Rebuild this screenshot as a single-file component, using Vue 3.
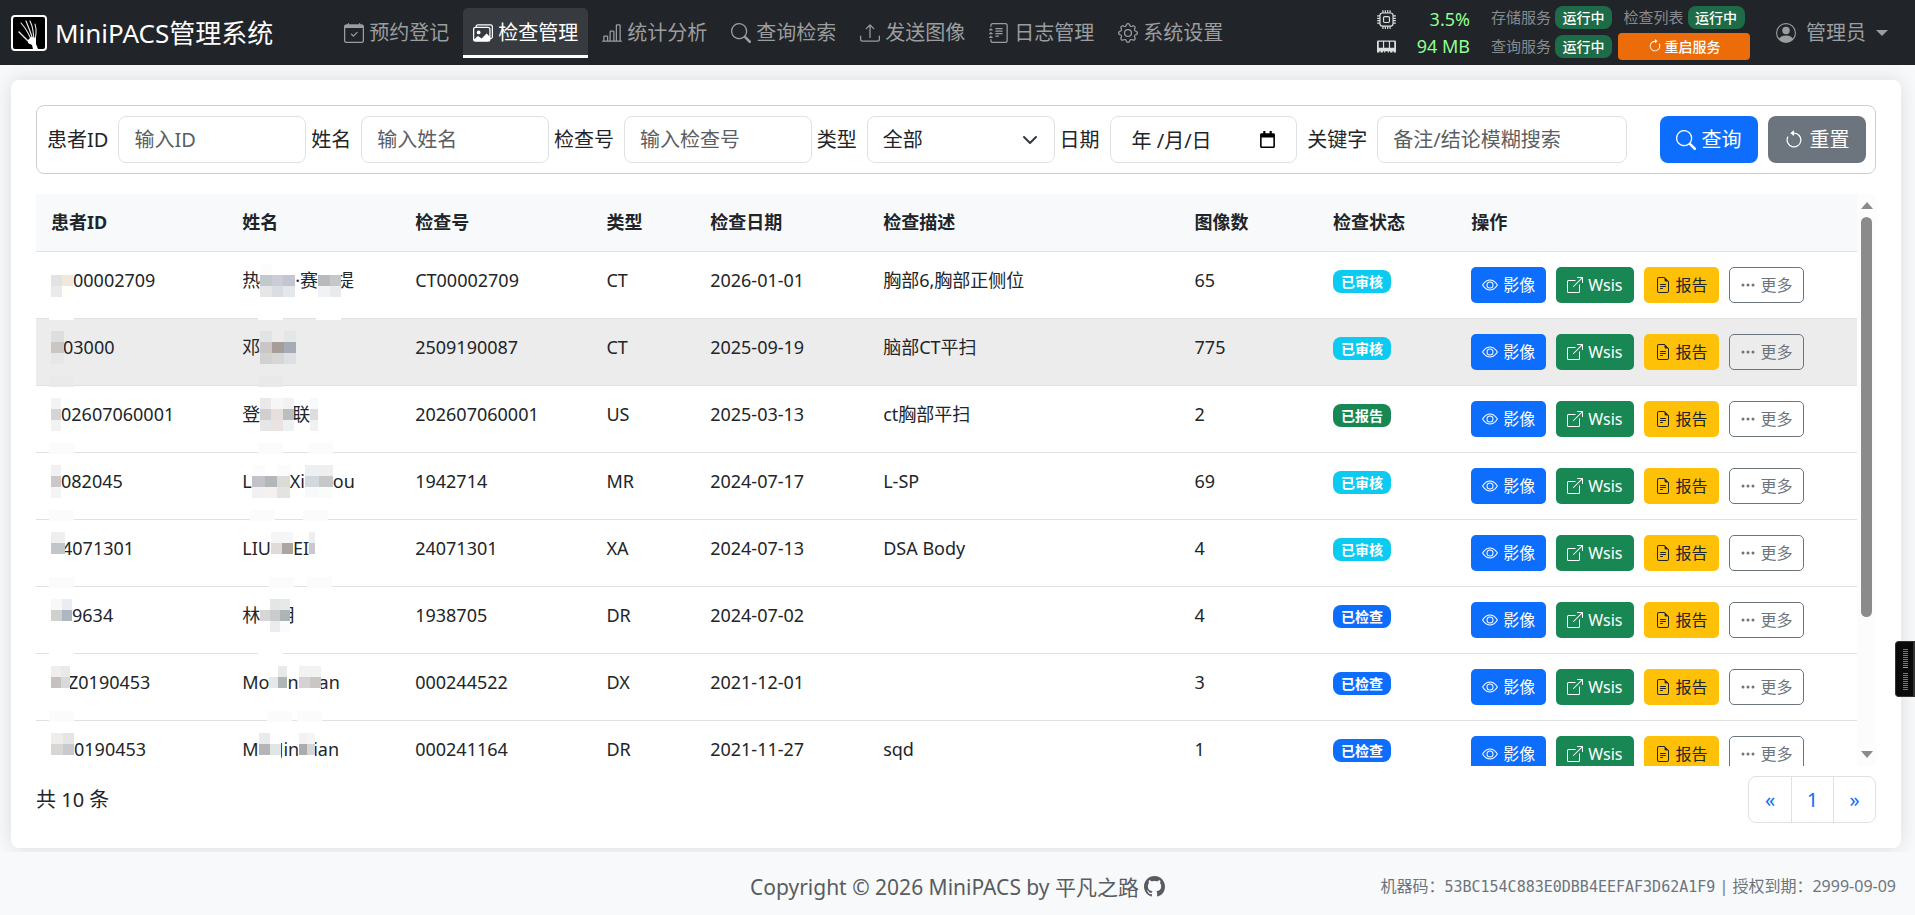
<script setup>
import { ref, h } from 'vue'

const icons = {
  calendar: ['M10.854 7.146a.5.5 0 0 1 0 .708l-3 3a.5.5 0 0 1-.708 0l-1.5-1.5a.5.5 0 1 1 .708-.708L7.5 9.793l2.646-2.647a.5.5 0 0 1 .708 0', 'M3.5 0a.5.5 0 0 1 .5.5V1h8V.5a.5.5 0 0 1 1 0V1h1a2 2 0 0 1 2 2v11a2 2 0 0 1-2 2H2a2 2 0 0 1-2-2V3a2 2 0 0 1 2-2h1V.5a.5.5 0 0 1 .5-.5M1 4v10a1 1 0 0 0 1 1h12a1 1 0 0 0 1-1V4z'],
  images: ['M4.502 9a1.5 1.5 0 1 0 0-3 1.5 1.5 0 0 0 0 3', 'M14.002 13a2 2 0 0 1-2 2h-10a2 2 0 0 1-2-2V5A2 2 0 0 1 2 3a2 2 0 0 1 2-2h10a2 2 0 0 1 2 2v8a2 2 0 0 1-1.998 2M14 2H4a1 1 0 0 0-1 1h9.002a2 2 0 0 1 2 2v7A1 1 0 0 0 15 11V3a1 1 0 0 0-1-1M2.002 4a1 1 0 0 0-1 1v8l2.646-2.354a.5.5 0 0 1 .63-.062l2.66 1.773 3.71-3.71a.5.5 0 0 1 .577-.094l1.777 1.947V5a1 1 0 0 0-1-1z'],
  chart: ['M11 2a1 1 0 0 1 1-1h2a1 1 0 0 1 1 1v12h.5a.5.5 0 0 1 0 1H.5a.5.5 0 0 1 0-1H1v-3a1 1 0 0 1 1-1h2a1 1 0 0 1 1 1v3h1V7a1 1 0 0 1 1-1h2a1 1 0 0 1 1 1v7h1zm1 12h2V2h-2zm-3 0V7H7v7zm-5 0v-3H2v3z'],
  search: ['M11.742 10.344a6.5 6.5 0 1 0-1.397 1.398h-.001q.044.06.098.115l3.85 3.85a1 1 0 0 0 1.415-1.414l-3.85-3.85a1 1 0 0 0-.115-.1zM12 6.5a5.5 5.5 0 1 1-11 0 5.5 5.5 0 0 1 11 0'],
  upload: ['M.5 9.9a.5.5 0 0 1 .5.5v2.5a1 1 0 0 0 1 1h12a1 1 0 0 0 1-1v-2.5a.5.5 0 0 1 1 0v2.5a2 2 0 0 1-2 2H2a2 2 0 0 1-2-2v-2.5a.5.5 0 0 1 .5-.5', 'M7.646 1.146a.5.5 0 0 1 .708 0l3 3a.5.5 0 0 1-.708.708L8.5 2.707V11.5a.5.5 0 0 1-1 0V2.707L5.354 4.854a.5.5 0 1 1-.708-.708z'],
  journal: ['M5 10.5a.5.5 0 0 1 .5-.5h2a.5.5 0 0 1 0 1h-2a.5.5 0 0 1-.5-.5m0-2a.5.5 0 0 1 .5-.5h5a.5.5 0 0 1 0 1h-5a.5.5 0 0 1-.5-.5m0-2a.5.5 0 0 1 .5-.5h5a.5.5 0 0 1 0 1h-5a.5.5 0 0 1-.5-.5m0-2a.5.5 0 0 1 .5-.5h5a.5.5 0 0 1 0 1h-5a.5.5 0 0 1-.5-.5', 'M3 0h10a2 2 0 0 1 2 2v12a2 2 0 0 1-2 2H3a2 2 0 0 1-2-2v-1h1v1a1 1 0 0 0 1 1h10a1 1 0 0 0 1-1V2a1 1 0 0 0-1-1H3a1 1 0 0 0-1 1v1H1V2a2 2 0 0 1 2-2', 'M1 5v-.5a.5.5 0 0 1 1 0V5h.5a.5.5 0 0 1 0 1h-2a.5.5 0 0 1 0-1zm0 3v-.5a.5.5 0 0 1 1 0V8h.5a.5.5 0 0 1 0 1h-2a.5.5 0 0 1 0-1zm0 3v-.5a.5.5 0 0 1 1 0v.5h.5a.5.5 0 0 1 0 1h-2a.5.5 0 0 1 0-1z'],
  gear: ['M8 4.754a3.246 3.246 0 1 0 0 6.492 3.246 3.246 0 0 0 0-6.492M5.754 8a2.246 2.246 0 1 1 4.492 0 2.246 2.246 0 0 1-4.492 0', 'M9.796 1.343c-.527-1.79-3.065-1.79-3.592 0l-.094.319a.873.873 0 0 1-1.255.52l-.292-.16c-1.64-.892-3.433.902-2.54 2.541l.159.292a.873.873 0 0 1-.52 1.255l-.319.094c-1.79.527-1.79 3.065 0 3.592l.319.094a.873.873 0 0 1 .52 1.255l-.16.292c-.892 1.64.901 3.434 2.541 2.54l.292-.159a.873.873 0 0 1 1.255.52l.094.319c.527 1.79 3.065 1.79 3.592 0l.094-.319a.873.873 0 0 1 1.255-.52l.292.16c1.64.893 3.434-.902 2.54-2.541l-.159-.292a.873.873 0 0 1 .52-1.255l.319-.094c1.79-.527 1.79-3.065 0-3.592l-.319-.094a.873.873 0 0 1-.52-1.255l.16-.292c.893-1.64-.902-3.433-2.541-2.54l-.292.159a.873.873 0 0 1-1.255-.52zm-2.633.283c.246-.835 1.428-.835 1.674 0l.094.319a1.873 1.873 0 0 0 2.693 1.115l.291-.16c.764-.415 1.6.42 1.184 1.185l-.159.292a1.873 1.873 0 0 0 1.116 2.692l.318.094c.835.246.835 1.428 0 1.674l-.319.094a1.873 1.873 0 0 0-1.115 2.693l.16.291c.415.764-.42 1.6-1.185 1.184l-.291-.159a1.873 1.873 0 0 0-2.693 1.116l-.094.318c-.246.835-1.428.835-1.674 0l-.094-.319a1.873 1.873 0 0 0-2.692-1.115l-.292.16c-.764.415-1.6-.42-1.184-1.185l.159-.291A1.873 1.873 0 0 0 1.945 8.93l-.319-.094c-.835-.246-.835-1.428 0-1.674l.319-.094A1.873 1.873 0 0 0 3.06 4.377l-.16-.292c-.415-.764.42-1.6 1.185-1.184l.292.159a1.873 1.873 0 0 0 2.692-1.115z'],
  cpu: ['M5 0a.5.5 0 0 1 .5.5V2h1V.5a.5.5 0 0 1 1 0V2h1V.5a.5.5 0 0 1 1 0V2h1V.5a.5.5 0 0 1 1 0V2A2.5 2.5 0 0 1 14 4.5h1.5a.5.5 0 0 1 0 1H14v1h1.5a.5.5 0 0 1 0 1H14v1h1.5a.5.5 0 0 1 0 1H14v1h1.5a.5.5 0 0 1 0 1H14a2.5 2.5 0 0 1-2.5 2.5v1.5a.5.5 0 0 1-1 0V14h-1v1.5a.5.5 0 0 1-1 0V14h-1v1.5a.5.5 0 0 1-1 0V14h-1v1.5a.5.5 0 0 1-1 0V14A2.5 2.5 0 0 1 2 11.5H.5a.5.5 0 0 1 0-1H2v-1H.5a.5.5 0 0 1 0-1H2v-1H.5a.5.5 0 0 1 0-1H2v-1H.5a.5.5 0 0 1 0-1H2A2.5 2.5 0 0 1 4.5 2V.5A.5.5 0 0 1 5 0m-.5 3A1.5 1.5 0 0 0 3 4.5v7A1.5 1.5 0 0 0 4.5 13h7a1.5 1.5 0 0 0 1.5-1.5v-7A1.5 1.5 0 0 0 11.5 3zM5 6.5A1.5 1.5 0 0 1 6.5 5h3A1.5 1.5 0 0 1 11 6.5v3A1.5 1.5 0 0 1 9.5 11h-3A1.5 1.5 0 0 1 5 9.5zM6.5 6a.5.5 0 0 0-.5.5v3a.5.5 0 0 0 .5.5h3a.5.5 0 0 0 .5-.5v-3a.5.5 0 0 0-.5-.5z'],
  memory: ['M1 3a1 1 0 0 0-1 1v9h2v-1h1v1h2v-1h1v1h1v-1h2v1h1v-1h1v1h2v-1h1v1h2V4a1 1 0 0 0-1-1zM1.5 4h3.500v5h-3.500zm4.500 0h4v5H6zm5 0h3.500v5H11z'],
  person: ['M11 6a3 3 0 1 1-6 0 3 3 0 0 1 6 0', 'M0 8a8 8 0 1 1 16 0A8 8 0 0 1 0 8m8-7a7 7 0 0 0-5.468 11.37C3.242 11.226 4.805 10 8 10s4.757 1.225 5.468 2.37A7 7 0 0 0 8 1'],
  clockwise: ['M8 3a5 5 0 1 0 4.546 2.914.5.5 0 0 1 .908-.417A6 6 0 1 1 8 2z', 'M8 4.466V.534a.25.25 0 0 1 .41-.192l2.36 1.966c.12.1.12.284 0 .384L8.41 4.658A.25.25 0 0 1 8 4.466'],
  counter: ['M8 3a5 5 0 1 1-4.546 2.914.5.5 0 0 0-.908-.417A6 6 0 1 0 8 2z', 'M8 4.466V.534a.25.25 0 0 0-.41-.192L5.23 2.308a.25.25 0 0 0 0 .384l2.36 1.966A.25.25 0 0 0 8 4.466'],
  eye: ['M16 8s-3-5.5-8-5.5S0 8 0 8s3 5.5 8 5.5S16 8 16 8M1.173 8a13 13 0 0 1 1.66-2.043C4.12 4.668 5.88 3.5 8 3.5s3.879 1.168 5.168 2.457A13 13 0 0 1 14.828 8q-.086.13-.195.288c-.335.48-.83 1.12-1.465 1.755C11.879 11.332 10.119 12.5 8 12.5s-3.879-1.168-5.168-2.457A13 13 0 0 1 1.172 8z', 'M8 5.5a2.5 2.5 0 1 0 0 5 2.5 2.5 0 0 0 0-5M4.5 8a3.5 3.5 0 1 1 7 0 3.5 3.5 0 0 1-7 0'],
  open: ['M8.636 3.5a.5.5 0 0 0-.5-.5H1.5A1.5 1.5 0 0 0 0 4.5v10A1.5 1.5 0 0 0 1.5 16h10a1.5 1.5 0 0 0 1.5-1.5V7.864a.5.5 0 0 0-1 0V14.5a.5.5 0 0 1-.5.5h-10a.5.5 0 0 1-.5-.5v-10a.5.5 0 0 1 .5-.5h6.636a.5.5 0 0 0 .5-.5', 'M16 .5a.5.5 0 0 0-.5-.5h-5a.5.5 0 0 0 0 1h3.793L6.146 9.146a.5.5 0 1 0 .708.708L15 1.707V5.5a.5.5 0 0 0 1 0z'],
  file: ['M5.5 7a.5.5 0 0 0 0 1h5a.5.5 0 0 0 0-1zM5 9.5a.5.5 0 0 1 .5-.5h5a.5.5 0 0 1 0 1h-5a.5.5 0 0 1-.5-.5m0 2a.5.5 0 0 1 .5-.5h2a.5.5 0 0 1 0 1h-2a.5.5 0 0 1-.5-.5', 'M9.5 0H4a2 2 0 0 0-2 2v12a2 2 0 0 0 2 2h8a2 2 0 0 0 2-2V4.5zm0 1v2A1.5 1.5 0 0 0 11 4.5h2V14a1 1 0 0 1-1 1H4a1 1 0 0 1-1-1V2a1 1 0 0 1 1-1z'],
  dots: ['M3 9.5a1.5 1.5 0 1 1 0-3 1.5 1.5 0 0 1 0 3m5 0a1.5 1.5 0 1 1 0-3 1.5 1.5 0 0 1 0 3m5 0a1.5 1.5 0 1 1 0-3 1.5 1.5 0 0 1 0 3'],
  date: ['M4 0h2v2h4V0h2v2h2a1.5 1.5 0 0 1 1 1.5v11a1.5 1.5 0 0 1-1.5 1.5h-11A1.5 1.5 0 0 1 1 14.5v-11A1.5 1.5 0 0 1 2 2h2zM2.5 6v8.5h11V6z'],
  github: ['M8 0C3.58 0 0 3.58 0 8c0 3.54 2.29 6.53 5.47 7.59.4.07.55-.17.55-.38 0-.19-.01-.82-.01-1.49-2.01.37-2.53-.49-2.69-.94-.09-.23-.48-.94-.82-1.13-.28-.15-.68-.52-.01-.53.63-.01 1.08.58 1.23.82.72 1.21 1.87.87 2.33.66.07-.52.28-.87.51-1.07-1.78-.2-3.64-.89-3.64-3.95 0-.87.31-1.59.82-2.15-.08-.2-.36-1.02.08-2.12 0 0 .67-.21 2.2.82.64-.18 1.32-.27 2-.27s1.36.09 2 .27c1.53-1.04 2.2-.82 2.2-.82.44 1.1.16 1.92.08 2.12.51.56.82 1.27.82 2.15 0 3.07-1.87 3.75-3.65 3.95.29.25.54.73.54 1.48 0 1.07-.01 1.93-.01 2.2 0 .21.15.46.55.38A8.01 8.01 0 0 0 16 8c0-4.42-3.58-8-8-8']
}

const Icon = (props) => h('svg', { class: 'icon', viewBox: '0 0 16 16', 'aria-hidden': 'true' },
  icons[props.name].map((d) => h('path', { d, fill: 'currentColor', 'fill-rule': 'evenodd' })))
Icon.props = ['name']

const nav = [
  ['calendar', '预约登记'], ['images', '检查管理'], ['chart', '统计分析'], ['search', '查询检索'],
  ['upload', '发送图像'], ['journal', '日志管理'], ['gear', '系统设置']
]
const columns = ['患者ID', '姓名', '检查号', '类型', '检查日期', '检查描述', '图像数', '检查状态', '操作']
const type = ref('全部')

// A mask hides part of a value: advance width, three rows of tile colours,
// the smudge on the row border, and how far the tiles reach over the next glyph.
const m = (w, top, mid, low, smudge = '#fbfbfb', over = 0) => ({ w, tiles: [top, mid, low], smudge, over })

const rows = [
  { id: [m(22, ['#fff', '#fff'], ['#e1e2e2', '#efe9dc'], ['#e9eaeb', '#fffef8'], '#fff'), '00002709'],
    name: ['热', m(35, ['#fcfcfc', '#fff', '#fff'], ['#c0c9cb', '#cccbd8', '#c2c6d2'], ['#e6e6e7', '#dadde1', '#e5e8ea'], '#fff'), '·赛', m(18, ['#fff', '#fff'], ['#b9babd', '#c4c8c9'], ['#f0f2f4', '#e8eaec'], '#fff', 5), '提'],
    no: 'CT00002709', type: 'CT', date: '2026-01-01', desc: '胸部6,胸部正侧位', n: 65, state: '已审核' },
  { id: [m(12, ['#dcdee0'], ['#cac6c2'], ['#e7e7e7'], '#eaeaea', 1), '03000'],
    name: ['邓', m(36, ['#e1e4e3', '#ececeb', '#e3e7e5'], ['#c9c6c5', '#a69d98', '#a6acb5'], ['#d1d1d1', '#d6d6d6', '#dedfe2'], '#e9e9e9')],
    no: '2509190087', type: 'CT', date: '2025-09-19', desc: '脑部CT平扫', n: 775, state: '已审核', active: true },
  { id: [m(10, ['#f3f3f3'], ['#d3d4d3'], ['#f2f2f3']), '02607060001'],
    name: ['登', m(32, ['#e9e9e9', '#f6f6f6', '#f2f2f2'], ['#d1d0cf', '#e7dfdd', '#b8bfbd'], ['#e5e7e6', '#e9e4e4', '#eff0f2'], '#fbfbfb', 2), '联', m(8, ['#f7f9fb'], ['#dddddf'], ['#f1f1f1'])],
    no: '202607060001', type: 'US', date: '2025-03-13', desc: 'ct胸部平扫', n: 2, state: '已报告' },
  { id: [m(10, ['#f1f1f1'], ['#cdc8c7'], ['#f4f4f5']), '082045'],
    name: ['L', m(38, ['#fcfcfc', '#fff', '#fbfbfb'], ['#c4c2c9', '#b2b7b8', '#dbdcd6'], ['#f1f1f1', '#f6f0ee', '#e2e4e2']), 'Xi', m(28, ['#edf0f3', '#efefef'], ['#d1d8de', '#c5c8c9'], ['#f7faf9', '#fafcfb']), 'ou'],
    no: '1942714', type: 'MR', date: '2024-07-17', desc: 'L-SP', n: 69, state: '已审核' },
  { id: [m(11, ['#eeeeef'], ['#c1c7c9'], ['#fff'], '#fbfbfb', 3), '4071301'],
    name: ['LIU', m(22, ['#f5f5f5', '#f4f6f8'], ['#e2dada', '#aaa7a3'], ['#fff', '#fff']), 'EI', m(6, ['#eeeef1'], ['#c9c8d0'], ['#fff'])],
    no: '24071301', type: 'XA', date: '2024-07-13', desc: 'DSA Body', n: 4, state: '已审核' },
  { id: [m(21, ['#f7f9f8', '#e9edf1'], ['#d0d1cf', '#adb7c1'], ['#fff', '#fff'], '#fff'), '9634'],
    name: ['林', m(18, ['#fff', '#e4e5e6', '#e7e8e8'], ['#d6d6d6', '#c9cbcc', '#aeb3b6'], ['#fff', '#ebecef', '#fbfbfb'], '#fff', 12), '月'],
    no: '1938705', type: 'DR', date: '2024-07-02', desc: '', n: 4, state: '已检查' },
  { id: [m(17, ['#efeeec', '#e9e9e8'], ['#c6c1be', '#d9d9d9'], ['#fff', '#fff'], '#fbfbfb', 2), 'Z0190453'],
    name: ['Mo', m(18, ['#fff', '#e7eae9'], ['#e4e8e8', '#adb5b7'], ['#fff', '#fff']), 'n', m(20, ['#f4f1f3', '#f3f2f3'], ['#d6d1d4', '#cac6c4'], ['#fff', '#fff'], '#fbfbfb', 2), 'an'],
    no: '000244522', type: 'DX', date: '2021-12-01', desc: '', n: 3, state: '已检查' },
  { id: [m(23, ['#efedec', '#e6e5e4'], ['#d9d5d3', '#c9cacd'], ['#fff', '#fff']), '0190453'],
    name: ['M', m(20, ['#e8eaeb', '#fff'], ['#b5b5b5', '#e0e5e5'], ['#fff', '#fff'], '#fbfbfb', 2), 'Jin', m(14, ['#f4f1f3', '#f6f5f6'], ['#aaacad', '#d9d5d5'], ['#fff', '#fff'], '#fbfbfb', 2), 'ian'],
    no: '000241164', type: 'DR', date: '2021-11-27', desc: 'sqd', n: 1, state: '已检查' }
]
const stateClass = { 已审核: 'cyan', 已报告: 'green', 已检查: 'blue' }

const Masked = (props) => h('span', { class: 'masked' }, props.parts.map((p) => {
  if (typeof p === 'string') return p
  const cell = (p.w + p.over) / p.tiles[0].length
  const rects = p.tiles.flatMap((line, y) => line.map((fill, x) =>
    h('rect', { x: x * cell, y: y * 11, width: cell, height: 11, fill })))
  rects.push(h('rect', { x: -2, y: 45, width: 25, height: 11, fill: p.smudge }))
  return h('svg', { class: 'mask', width: p.w, height: 33, 'aria-hidden': 'true', 'shape-rendering': 'crispEdges' }, rects)
}))
Masked.props = ['parts']
</script>

<template>
  <div class="page">
    <header class="topbar">
      <a class="brand" href="#">
        <svg class="logo" viewBox="0 0 36 36" aria-hidden="true">
          <rect x="1" y="1" width="34" height="34" rx="3" fill="#000" stroke="#fff" stroke-width="2" />
          <g fill="none" stroke="#e8e8e8" stroke-linecap="round">
            <path d="M19 28 14 23 11 20 8 17" stroke-width="1.4" />
            <path d="M21 26 17 18 14 13 10 8" stroke-width="1.1" />
            <path d="M22 25 19 16 17 11 15 6" stroke-width="1.2" />
            <path d="M23 25 22 16 21 11 19 6" stroke-width="1.1" />
            <path d="M24 26 25 18 25 14 24 9" stroke-width="1.1" />
          </g>
          <path d="M17 25 20 22 25 23 25 29 27 34H22L21 30 17 28Z" fill="#fff" />
        </svg>
        <span>MiniPACS管理系统</span>
      </a>
      <nav class="nav">
        <a v-for="[icon, label] in nav" :key="label" href="#" :class="{ active: label === '检查管理' }"><Icon :name="icon" /><span>{{ label }}</span></a>
      </nav>
      <div class="usage">
        <Icon name="cpu" /><span>3.5%</span>
        <Icon name="memory" /><span>94 MB</span>
      </div>
      <div class="services">
        <div class="service"><span>存储服务</span><b>运行中</b></div>
        <div class="service second"><span>检查列表</span><b>运行中</b></div>
        <div class="service"><span>查询服务</span><b>运行中</b></div>
        <button class="restart" type="button"><Icon name="clockwise" />重启服务</button>
      </div>
      <button class="user" type="button"><Icon name="person" /><span>管理员</span><i class="caret"></i></button>
    </header>

    <main class="card">
      <form class="filter" @submit.prevent>
        <label for="f-id">患者ID</label><input id="f-id" type="text" placeholder="输入ID" />
        <label for="f-name">姓名</label><input id="f-name" type="text" placeholder="输入姓名" />
        <label for="f-no">检查号</label><input id="f-no" type="text" placeholder="输入检查号" />
        <label for="f-type">类型</label>
        <select id="f-type" v-model="type"><option>全部</option><option>CT</option><option>MR</option></select>
        <label for="f-date">日期</label>
        <span class="date">
          <input id="f-date" type="text" value="年 /月/日" />
          <button type="button" aria-label="选择日期"><Icon name="date" /></button>
        </span>
        <label class="keyword" for="f-key">关键字</label><input id="f-key" class="wide" type="text" placeholder="备注/结论模糊搜索" />
        <div class="submit">
          <button class="blue" type="submit"><Icon name="search" />查询</button>
          <button class="gray" type="reset"><Icon name="counter" />重置</button>
        </div>
      </form>

      <div class="list">
        <div class="scroll">
          <table>
            <colgroup><col v-for="(c, i) in columns" :key="c" :class="'c' + i" /></colgroup>
            <thead><tr><th v-for="c in columns" :key="c" scope="col">{{ c }}</th></tr></thead>
            <tbody>
              <tr v-for="r in rows" :key="r.no" :class="{ hover: r.active }">
                <td><Masked :parts="r.id" /></td>
                <td><Masked :parts="r.name" /></td>
                <td>{{ r.no }}</td><td>{{ r.type }}</td><td>{{ r.date }}</td><td>{{ r.desc }}</td><td>{{ r.n }}</td>
                <td><span class="badge" :class="stateClass[r.state]">{{ r.state }}</span></td>
                <td>
                  <div class="actions">
                    <button class="blue" type="button"><Icon name="eye" />影像</button>
                    <button class="green" type="button"><Icon name="open" />Wsis</button>
                    <button class="yellow" type="button"><Icon name="file" />报告</button>
                    <button class="more" type="button"><Icon name="dots" />更多</button>
                  </div>
                </td>
              </tr>
            </tbody>
          </table>
        </div>
        <div class="bar" aria-hidden="true"><i class="up"></i><div class="track"><div class="thumb"></div></div><i class="down"></i></div>
      </div>

      <div class="foot">
        <span>共 10 条</span>
        <nav class="pages"><a href="#">«</a><a href="#">1</a><a href="#">»</a></nav>
      </div>
    </main>

    <footer class="footer">
      <span class="copy">Copyright © 2026 MiniPACS by 平凡之路 <a href="#" aria-label="GitHub"><Icon name="github" /></a></span>
      <span class="license">机器码：<code>53BC154C883E0DBB4EEFAF3D62A1F9</code> | 授权到期：2999-09-09</span>
    </footer>

    <aside class="dock" aria-hidden="true">
      <svg viewBox="0 0 20 56">
        <path d="M7 7.5h5m-5 2h5m-5 2h5m-5 2h5m-5 2h5m-5 2h5m-5 2h5m-5 2h5m-5 2h5m-5 8h5m-5 2h5m-5 2h5m-5 2h5m-5 2h5m-5 2h5m-5 2h5m-5 2h5m-5 2h5" stroke="#777" />
        <path d="M7 25.5h5" stroke="#e8940c" />
      </svg>
    </aside>
  </div>
</template>

<style>
body { margin: 0; background: #f8f9fa; }
.icon { display: block; width: 1em; height: 1em; flex: none; }
.mask { position: relative; overflow: visible; flex: none; }
.masked { display: flex; align-items: center; height: 27px; white-space: nowrap; }
</style>

<style scoped>
.page { display: flex; flex-direction: column; height: 100vh; overflow: hidden; color: #212529; font: 20px/30px "Noto Sans", "Noto Sans CJK SC", sans-serif; }
.page *, .page { box-sizing: border-box; }
a { color: inherit; text-decoration: none; }
button, input, select { font: inherit; color: inherit; margin: 0; }
button { display: inline-flex; align-items: center; justify-content: center; border: 1px solid transparent; white-space: nowrap; }

.topbar { display: flex; align-items: center; flex: none; height: 65px; padding: 0 26px 0 11px; background: #212529; color: #9b9d9f; position: relative; z-index: 1; }
.brand { display: flex; align-items: center; gap: 8px; color: #fff; font-size: 26px; white-space: nowrap; margin-right: 61px; }
.logo { width: 36px; height: 36px; }
.nav { display: flex; gap: 4px; margin-right: auto; }
.nav a { display: flex; align-items: center; gap: 5px; height: 50px; padding: 3px 10px 0; border-bottom: 3px solid transparent; border-radius: 5px 5px 0 0; white-space: nowrap; }
.nav a.active { color: #fff; background: #373a3e; border-color: #fff; }
.usage { display: grid; grid-template-columns: 19px 64px; gap: 0 10px; line-height: 27px; font-size: 18px; color: #90ff90; align-items: center; text-align: right; }
.usage .icon { color: #dcdddd; font-size: 19px; }
.services { display: grid; grid-template-columns: auto auto; gap: 4px 6px; margin: 0 25px 0 21px; font-size: 15px; line-height: 23px; color: #878b8f; align-items: center; }
.service { display: flex; gap: 4px; align-items: center; white-space: nowrap; }
.service.second { justify-content: center; }
.service b { width: 57px; text-align: center; border-radius: 8px; background: #1e6b47; color: #fff; font-size: 14px; font-weight: 500; }
.restart { width: 132px; height: 27px; gap: 3px; padding: 0; background: #ec6c0a; border-radius: 4px; color: #fff; font-size: 14px; font-weight: 500; }
.user { gap: 10px; padding: 0; background: none; }
.caret { border: 6px solid transparent; border-top-color: currentColor; border-bottom: 0; }

.card { display: flex; flex-direction: column; flex: 1; min-height: 0; margin: 15px 14px 4px 11px; padding: 25px; border-radius: 8px; background: #fff; box-shadow: 0 0 20px rgba(0, 0, 0, .12); }
.filter { display: flex; align-items: center; border: 1px solid #cdd0d2; border-radius: 8px; padding: 10px 9px 10px 10px; }
.filter label { flex: none; margin-right: 10px; white-space: nowrap; }
.filter label:not(:first-child) { margin-left: 5px; }
.filter label.keyword { margin-left: 10px; }
.filter input, .filter select, .date { flex: 1 1 188px; min-width: 0; height: 47px; padding: 0 15px; border: 1px solid #dee2e6; border-radius: 8px; background: #fff; }
.filter input.wide { flex-basis: 250px; }
.filter input::placeholder { color: #5b5e62; opacity: 1; }
.filter select { appearance: none; background: url("data:image/svg+xml,%3Csvg xmlns='http://www.w3.org/2000/svg' viewBox='0 0 16 16'%3E%3Cpath fill='none' stroke='%23343a40' stroke-linecap='round' stroke-linejoin='round' stroke-width='2' d='m2 5 6 6 6-6'/%3E%3C/svg%3E") no-repeat right 16px center / 16px; }
.filter .date { display: flex; align-items: center; padding: 0 20px 0 0; }
.filter .date input { flex: 1 1 0; height: 45px; border: 0; padding: 0 0 0 21px; background: none; }
.date button { padding: 0; border: 0; background: none; font-size: 17px; color: #000; }
.submit { display: flex; flex: none; gap: 10px; margin-left: 33px; }
.submit button { width: 98px; height: 47px; gap: 5px; padding: 0; border-radius: 8px; }
.blue { background: #0d6efd; color: #fff; }
.green { background: #198754; color: #fff; }
.cyan { background: #0dcaf0; color: #fff; }
.yellow { background: #ffc107; color: #212529; }
.gray { background: #6c757d; color: #fff; }

.list { display: flex; flex: 1; min-height: 0; margin: 20px 0 10px; }
.scroll { flex: 1; min-width: 0; overflow: hidden; }
table { width: 100%; table-layout: fixed; border-collapse: separate; border-spacing: 0; font-size: 18px; line-height: 27px; }
.c0 { width: 10.5%; } .c1 { width: 9.5%; } .c2 { width: 10.5%; } .c3 { width: 5.7%; } .c4 { width: 9.5%; }
.c5 { width: 17.1%; } .c6 { width: 7.6%; } .c7 { width: 7.6%; }
th, td { padding: 15px; text-align: left; vertical-align: top; border-bottom: 1px solid #dee2e6; white-space: nowrap; }
th { height: 58px; background: #f8f9fa; font-weight: 700; }
td { height: 67px; }
tr.hover td { background: #ececec; }
.badge { display: block; width: 58px; height: 23px; margin-top: 3px; border-radius: 8px; text-align: center; font-size: 14px; line-height: 23px; font-weight: 700; }
.actions { display: flex; gap: 10px; }
.actions button { height: 36px; padding: 0 10px; gap: 5px; font-size: 16px; border-radius: 5px; }
.actions .more { border-color: #6c757d; background: none; color: #6c757d; }
.bar { display: flex; flex-direction: column; align-items: center; width: 19px; padding: 8px 0; background: #fcfcfc; }
.up, .down { border: 6px solid transparent; }
.up { border-top: 0; border-bottom: 7px solid #8b8b8b; }
.down { border-bottom: 0; border-top: 7px solid #8b8b8b; }
.track { flex: 1; padding: 8px 0; width: 11px; }
.thumb { height: 76%; border-radius: 6px; background: #8b8b8b; }

.foot { display: flex; justify-content: space-between; align-items: center; }
.pages { display: flex; border: 1px solid #dee2e6; border-radius: 8px; color: #0d6efd; }
.pages a { width: 42px; line-height: 45px; text-align: center; }
.pages a + a { border-left: 1px solid #dee2e6; }

.footer { display: grid; grid-template-columns: 1fr auto 1fr; align-items: center; flex: none; height: 63px; padding: 6px 19px 0; background: #f8f9fa; position: relative; color: #585c60; white-space: nowrap; }
.copy { grid-column: 2; display: flex; align-items: center; gap: 5px; font-size: 21px; }
.license { text-align: right; font-size: 16px; color: #6c757d; }
code { font-family: "DejaVu Sans Mono", "Liberation Mono", monospace; font-size: 15px; }
.dock { position: fixed; right: 0; top: 70%; width: 20px; height: 56px; border: 1px solid #333; border-right-width: 2px; border-radius: 4px 0 0 4px; background: #0a0a0a; }
.dock svg { display: block; width: 20px; height: 56px; }
</style>
